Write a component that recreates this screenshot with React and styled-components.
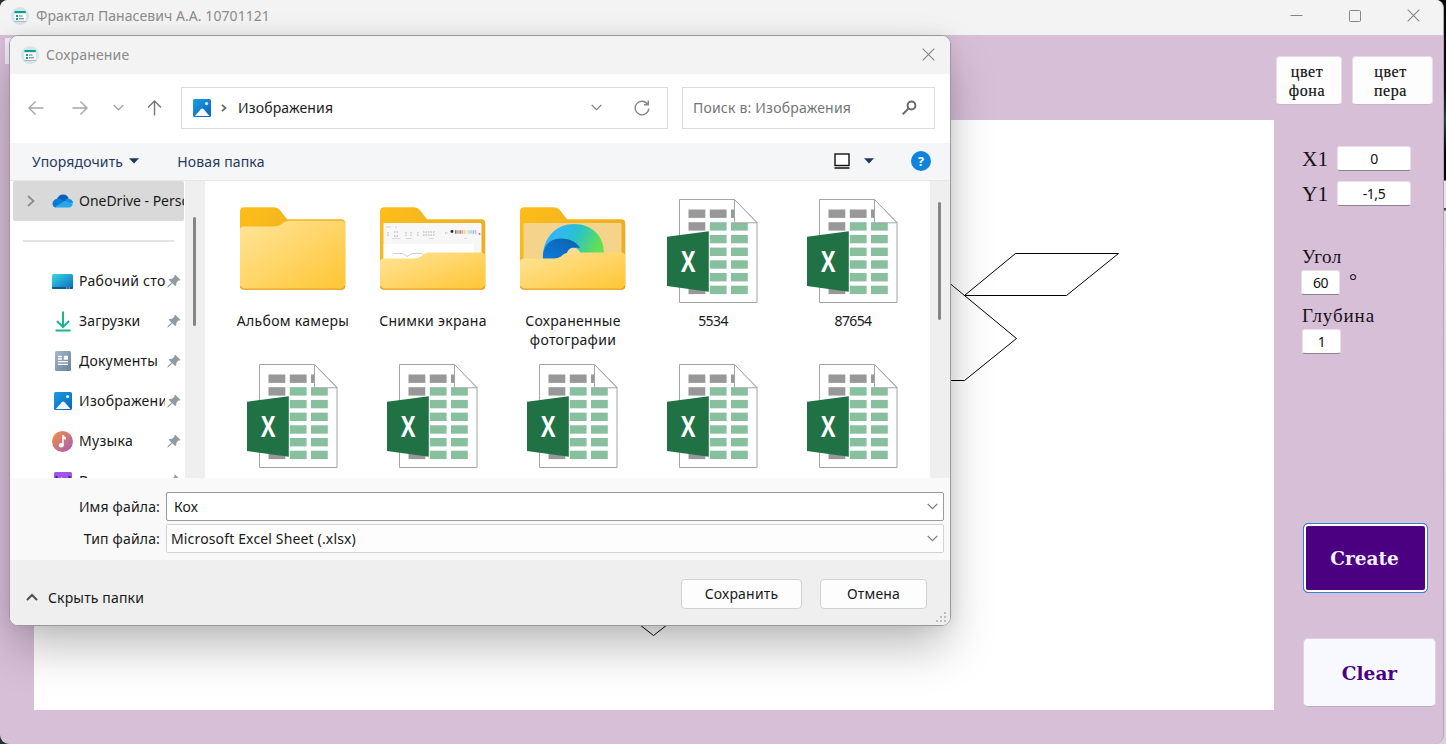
import React from "react";
import styled, { createGlobalStyle } from "styled-components";

const UI = `"Noto Sans", "Open Sans", sans-serif`;
const SERIF = `"Liberation Serif", serif`;

const Global = createGlobalStyle`
  * { box-sizing: border-box; }
  body { margin: 0; overflow: hidden; font-family: ${UI}; }
  svg { display: block; flex: none; }
`;

const Desktop = styled.div`
  width: 1446px;
  height: 744px;
  position: relative;
  overflow: hidden;
  background: linear-gradient(
    to bottom,
    #050807 0, #0a0d0c 90px, #26463c 120px, #050807 150px, #050807 180px,
    #e4e4e4 181px, #e4e4e4 208px, #34504a 208px, #34504a 210px, #dedede 211px, #d4d4d4 100%
  );
`;

const Corner = styled.div`
  position: absolute;
  left: 0;
  width: 12px;
  height: 12px;
  background: #26302a;
  ${(p) => (p.$bottom ? "bottom: 0;" : "top: 0;")}
`;

const MainWindow = styled.div`
  position: relative;
  width: 1444px;
  height: 744px;
  display: flex;
  flex-direction: column;
  background: #d8bfd8;
  border-right: 1px solid #b5a3b5;
  border-radius: 8px 8px 9px 9px;
  overflow: hidden;
`;

const MainTitle = styled.header`
  height: 35px;
  flex: none;
  display: flex;
  align-items: center;
  padding: 0 23px 4px 11px;
  background: #f3f3f3;
`;

const TitleText = styled.span`
  margin-left: 7px;
  color: #8b8b8b;
  font-size: 14px;
  letter-spacing: ${(p) => p.$ls || 0}px;
  white-space: nowrap;
`;

const WindowControls = styled.div`
  margin-left: auto;
  display: flex;
  gap: 46px;
  align-items: center;
`;

const TopBar = styled.div`
  height: 85px;
  flex: none;
  display: flex;
  justify-content: flex-end;
  gap: 10px;
  padding: 21px 10px 0 5px;
`;

const MenuStrip = styled.div`
  width: 300px;
  height: 26px;
  margin-top: -18px;
  margin-right: auto;
  background: #f1ecf5;
`;

const ColorButton = styled.button`
  width: ${(p) => p.$w}px;
  height: 49px;
  padding: 0 4px 0 0;
  border: 1px solid #e6dce6;
  border-bottom-color: #c8b8c8;
  border-radius: 4px;
  background: #fdfdfd;
  color: #111;
  font: 16px/19px ${SERIF};
  letter-spacing: 0.6px;
  -webkit-text-stroke: 0.2px #111;
`;

const Workspace = styled.div`
  display: flex;
  height: 590px;
  padding-left: 34px;
`;

const Canvas = styled.div`
  width: 1240px;
  background: #fff;
`;

const Controls = styled.aside`
  width: 169px;
  padding: 26px 0 0 28px;
  display: flex;
  flex-direction: column;
  color: #151015;
  font-family: ${SERIF};
`;

const CoordRow = styled.label`
  display: flex;
  align-items: center;
  height: 25px;
  margin-bottom: 10px;
  font-size: 21.5px;
`;

const CoordName = styled.span`
  width: 35px;
  padding-top: 1px;
`;

const Value = styled.div`
  width: ${(p) => p.$w}px;
  height: 25px;
  margin-top: ${(p) => p.$mt || 0}px;
  border-radius: 3px;
  border: 1px solid #e8e2e8;
  border-bottom: 1px solid #868686;
  background: #fff;
  color: #111;
  font: 14px/23px ${UI};
  letter-spacing: -0.4px;
  text-align: center;
`;

const FieldName = styled.div`
  font-size: 19px;
  line-height: 22px;
  letter-spacing: ${(p) => p.$ls}px;
  margin-top: ${(p) => p.$mt}px;
`;

const AngleRow = styled.div`
  display: flex;
  gap: 9px;
  margin: 2px 0 0 -1px;
  font-size: 20px;
  line-height: 22px;
`;

const ActionButton = styled.button`
  font: bold 18.5px "DejaVu Serif", serif;
  border-radius: 5px;
`;

const CreateButton = styled(ActionButton)`
  width: 125px;
  height: 70px;
  margin: 169px 0 0 1px;
  padding: 1px 2px 0 0;
  color: #f3eefb;
  background: #4b0082;
  border: 1.5px solid #2d86d3;
  box-shadow: inset 0 0 0 2px #fff;
`;

const ClearButton = styled(ActionButton)`
  width: 133px;
  height: 69px;
  margin: 45px 0 0 1px;
  padding: 1px 0 0;
  color: #4b0082;
  background: #f8f9ff;
  border: 1px solid #dcd2e2;
  border-bottom-color: #bfb0c2;
  flex: none;
`;

const Dialog = styled.section`
  position: absolute;
  left: 9px;
  top: 35px;
  width: 942px;
  height: 591px;
  display: flex;
  flex-direction: column;
  border: 1px solid #9c979c;
  border-radius: 9px;
  background: #fff;
  font-size: 14px;
  letter-spacing: 0.15px;
  overflow: hidden;
`;

const DialogShadow = styled.div`
  position: absolute;
  left: 9px;
  top: 35px;
  width: 942px;
  height: 591px;
  border-radius: 9px;
  box-shadow: 0 24px 48px -4px rgba(0, 0, 0, 0.27), 0 0 16px rgba(0, 0, 0, 0.08);
`;

const DialogTitle = styled.header`
  height: 38px;
  flex: none;
  display: flex;
  align-items: center;
  justify-content: space-between;
  padding: 0 15px 1px 11px;
  background: #f3f3f3;
`;

const TitleGroup = styled.div`
  display: flex;
  align-items: center;
`;

const NavBar = styled.div`
  height: 69px;
  flex: none;
  display: flex;
  align-items: center;
  padding: 0 15px 2px 18px;
`;

const NavGroup = styled.div`
  width: 153px;
  display: grid;
  grid-template-columns: 44px 41px 34px 34px;
  align-items: center;
`;

const AddressBox = styled.div`
  width: 487px;
  height: 42px;
  display: flex;
  align-items: center;
  padding: 0 17px 0 11px;
  border: 1px solid #dcdcdc;
`;

const AddressChevron = styled.svg`
  margin-left: 10px;
`;

const AddressText = styled.span`
  margin: 0 auto 0 11px;
  color: #1d1d1d;
`;

const RefreshIcon = styled.svg`
  margin-left: 32px;
`;

const SearchBox = styled.div`
  width: 253px;
  height: 42px;
  margin-left: auto;
  display: flex;
  align-items: center;
  justify-content: space-between;
  padding: 0 17px 0 10px;
  border: 1px solid #dcdcdc;
  color: #757575;
  letter-spacing: 0.2px;
`;

const Toolbar = styled.div`
  height: 38px;
  flex: none;
  display: flex;
  align-items: center;
  padding: 0 19px 1px 22px;
  background: #f4f6f8;
  border-bottom: 1px solid #e4e8ec;
  color: #24395c;
`;

const ToolbarSpacer = styled.div`
  width: ${(p) => (p.$w ? `${p.$w}px` : "auto")};
  flex: ${(p) => (p.$w ? "none" : 1)};
`;

const Browser = styled.div`
  height: 297px;
  flex: none;
  display: flex;
  overflow: hidden;
`;

const Sidebar = styled.nav`
  width: 175px;
  padding-left: 3px;
  overflow: hidden;
`;

const SideRow = styled.div`
  width: 171px;
  height: 40px;
  display: flex;
  align-items: center;
  padding-left: ${(p) => (p.$active ? 14 : 39)}px;
  background: ${(p) => (p.$active ? "#d9d9d9" : "transparent")};
  border-radius: 2px;
  overflow: hidden;
`;

const SideIcon = styled.span`
  width: 21px;
  margin-left: ${(p) => p.$ml || 0}px;
  display: flex;
  justify-content: center;
  flex: none;
`;

const SideText = styled.span`
  width: ${(p) => p.$w}px;
  flex: none;
  margin-left: 6px;
  margin-right: 2px;
  padding-bottom: 1px;
  color: #191919;
  letter-spacing: ${(p) => p.$ls}px;
  white-space: nowrap;
  overflow: hidden;
`;

const Divider = styled.div`
  height: 40px;
  display: flex;
  align-items: center;
  padding-left: 10px;
  &::after {
    content: "";
    width: 151px;
    height: 2px;
    background: #e4e4e4;
  }
`;

const ScrollTrack = styled.div`
  width: 20px;
  flex: none;
  padding: ${(p) => p.$top}px 0 0 ${(p) => p.$left}px;
  background: #efefef;
`;

const ScrollThumb = styled.div`
  width: 3px;
  height: ${(p) => p.$h}px;
  border-radius: 2px;
  background: #858585;
`;

const FileGrid = styled.div`
  width: 725px;
  padding: 17px 0 0 18px;
  display: grid;
  grid-template-columns: repeat(5, 140px);
  grid-auto-rows: 165px;
  align-content: start;
  overflow: hidden;
`;

const FileItem = styled.div`
  display: flex;
  flex-direction: column;
  align-items: center;
`;

const FileName = styled.div`
  margin-top: 7px;
  width: 122px;
  text-align: center;
  color: #191919;
  line-height: 19px;
  letter-spacing: ${(p) => (p.$digits ? -0.6 : 0.3)}px;
`;

const Fields = styled.div`
  height: 82px;
  flex: none;
  display: flex;
  flex-direction: column;
  gap: 3px;
  padding: 14px 6px 0 0;
  background: #f9f9f9;
`;

const FieldRow = styled.div`
  display: flex;
  align-items: center;
  height: 29px;
`;

const FieldLabel = styled.span`
  width: 150px;
  margin-right: 6px;
  text-align: right;
  color: #191919;
`;

const Combo = styled.div`
  flex: 1;
  height: 29px;
  display: flex;
  align-items: center;
  justify-content: space-between;
  padding: 0 5px 1px ${(p) => (p.$strong ? 7 : 4)}px;
  border: 1px solid ${(p) => (p.$strong ? "#9b9b9b" : "#d3d3d3")};
  border-radius: 2px;
  background: ${(p) => (p.$strong ? "#fff" : "#fdfdfd")};
  color: #191919;
`;

const Footer = styled.footer`
  flex: 1;
  display: flex;
  align-items: flex-start;
  padding: 19px 5px 0 16px;
  background: #efefef;
  color: #191919;
`;

const HideFolders = styled.div`
  display: flex;
  align-items: center;
  gap: 10px;
  margin: 9px auto 0 0;
  height: 18px;
`;

const DialogButton = styled.button`
  width: ${(p) => p.$w}px;
  height: 30px;
  margin-right: 18px;
  padding: 0 0 1px;
  border: 1px solid #d2d2d2;
  border-radius: 4px;
  background: #fdfdfd;
  color: #191919;
  font: 14px ${UI};
  letter-spacing: 0.2px;
`;

const Grip = styled.div`
  position: absolute;
  right: 3px;
  bottom: 2px;
`;

const AppIcon = () => (
  <svg width="18" height="18" viewBox="0 0 18 18">
    <circle cx="9" cy="9" r="9" fill="#d5e3ec" />
    <rect x="3.4" y="4" width="11.4" height="10" fill="#fff" />
    <rect x="3.4" y="4" width="11.4" height="2.2" fill="#0d9f89" />
    <path d="M3 14.4h12.2" stroke="#a3b0ba" strokeWidth=".9" />
    <path d="M5 8h2v2H5zM5 11h2v2H5z" fill="#0d9f89" />
    <path d="M8 9h3.5M8 11.8h5" stroke="#4e5d68" strokeWidth=".9" />
  </svg>
);

const Close = ({ size = 13 }) => (
  <svg width={size} height={size} viewBox="0 0 13 13" fill="none" stroke="#858585" strokeWidth="1.1">
    <path d="M.7.7l11.6 11.6M12.3.7L.7 12.3" />
  </svg>
);

const Chevron = ({ w = 11, color = "#7e7e7e", sw = 1.3 }) => (
  <svg width={w} height="7" viewBox="0 0 11 7" fill="none" stroke={color} strokeWidth={sw}>
    <path d="M.7.9l4.8 4.8L10.3.9" />
  </svg>
);

const Caret = () => (
  <svg width="10" height="6" viewBox="0 0 10 6">
    <path d="M0 .3h10L5 5.6z" fill="#1f3761" />
  </svg>
);

const Picture = ({ id }) => (
  <svg width="18" height="18" viewBox="0 0 18 18">
    <defs>
      <linearGradient id={id} x1="0" y1="0" x2="1" y2="1">
        <stop offset="0" stopColor="#1b9de2" />
        <stop offset="1" stopColor="#0a62bd" />
      </linearGradient>
    </defs>
    <rect width="18" height="18" rx="1.6" fill={`url(#${id})`} />
    <circle cx="13.6" cy="4.6" r="1.7" fill="#c9ebfc" />
    <path d="M1.8 17l6-6.8q1.4-1.3 2.8 0l6 6.8z" fill="#f2f8fd" />
  </svg>
);

const OneDrive = () => (
  <svg width="21" height="14" viewBox="0 0 21 14">
    <path d="M5 5.2C6.2 1.4 9 .3 11.4.4c2.8.1 4.7 1.8 5.3 4.2L12 9z" fill="#0862b8" />
    <path d="M5 4.8c2.3-.7 4 .1 5.6 1.1L14 8 3.5 13.5C-.7 12.5-.7 6 5 4.8z" fill="#0f78d4" />
    <path d="M13 6.2c1.3-1.9 3.3-2 4.6-1.2 2.2.4 3.4 2.2 3.4 4.3L16 10z" fill="#1490df" />
    <path d="M3 12.9l9.500-5.800c2.500.5 5.500 1.600 8.300 3.500-.6 1.700-2 2.900-4 2.900H5.500c-1 0-1.800-.1-2.500-.6z" fill="#28a8ea" />
  </svg>
);

const DesktopIcon = () => (
  <svg width="21" height="15" viewBox="0 0 21 15">
    <defs>
      <linearGradient id="desk" x1="0" y1="0" x2="1" y2="1">
        <stop offset="0" stopColor="#38d8e4" />
        <stop offset="1" stopColor="#0d68bd" />
      </linearGradient>
    </defs>
    <rect width="21" height="15" rx="1.5" fill="url(#desk)" />
    <path d="M0 13h21v.5q0 1.5-1.5 1.5h-18Q0 15 0 13.5z" fill="#16588b" />
    <path d="M14 14h1.2M16.5 14h1.2" stroke="#cde" strokeWidth="1" />
  </svg>
);

const DownloadIcon = () => (
  <svg width="16" height="21" viewBox="0 0 16 21" fill="none" stroke="#1db294" strokeWidth="2">
    <path d="M8 .5v15M2 10l6 6 6-6M.5 19.5h15" />
  </svg>
);

const DocumentIcon = () => (
  <svg width="16" height="20" viewBox="0 0 16 20">
    <defs>
      <linearGradient id="doc" x1="0" y1="0" x2="1" y2="1">
        <stop offset="0" stopColor="#a3b8cb" />
        <stop offset="1" stopColor="#65819f" />
      </linearGradient>
    </defs>
    <rect width="16" height="20" rx="1.5" fill="url(#doc)" />
    <path d="M3 5.5h4M3 8h4M3 10.7h10M3 13.4h10" stroke="#fff" strokeWidth="1.3" />
    <rect x="8.8" y="4.7" width="4.2" height="4" fill="#fff" />
  </svg>
);

const MusicIcon = () => (
  <svg width="21" height="21" viewBox="0 0 21 21">
    <defs>
      <linearGradient id="mus" x1="0" y1="0" x2="1" y2="1">
        <stop offset="0.1" stopColor="#ee8d4d" />
        <stop offset="1" stopColor="#a45ab8" />
      </linearGradient>
    </defs>
    <circle cx="10.5" cy="10.5" r="10.5" fill="url(#mus)" />
    <ellipse cx="9.2" cy="14.3" rx="2.5" ry="2.3" fill="#fff" />
    <path d="M10.2 4h1.5c.2 1.500 1 2 2.300 2.200v2.300c-.9.1-1.700-.1-2.300-.6v6.400h-1.500z" fill="#fff" />
  </svg>
);

const VideoIcon = () => (
  <svg width="18" height="18" viewBox="0 0 18 18">
    <rect width="18" height="18" rx="1.5" fill="#a254e6" />
    <path d="M1.5 4h2v2h-2zM14.5 4h2v2h-2z" fill="#45217a" />
    <path d="M7 5l5 4-5 4z" fill="#fff" />
  </svg>
);

const Pin = () => (
  <svg width="14" height="14" viewBox="0 0 14 14" fill="#8e99a3">
    <path d="M8 .5L13.5 6q-.8.9-2 .5L9.3 8.7q.6 2.100-.9 3.500L5.400 9.300 1 13.500l-.7-.3.200-.8L4.600 8.600 1.700 5.700q1.500-1.500 3.600-.9L7.500 2.600Q7.100 1.300 8 .5z" />
  </svg>
);

const HiddenDefs = styled.svg`
  position: absolute;
`;

const FolderDefs = () => (
  <HiddenDefs width="0" height="0">
    <defs>
      <linearGradient id="front" x1="0" y1="0" x2="1" y2="1">
        <stop offset="0" stopColor="#ffe49a" />
        <stop offset="1" stopColor="#ffc633" />
      </linearGradient>
      <linearGradient id="back" x1="0" y1="0" x2="1" y2="0.6">
        <stop offset="0" stopColor="#fdbd1a" />
        <stop offset="1" stopColor="#e9ac24" />
      </linearGradient>
      <linearGradient id="swirl" x1="0" y1="0" x2="1" y2="0.3">
        <stop offset="0" stopColor="#37a8f4" />
        <stop offset=".3" stopColor="#31b8f4" />
        <stop offset=".6" stopColor="#29c3c8" />
        <stop offset="1" stopColor="#62df55" />
      </linearGradient>
      <linearGradient id="wave" x1="0" y1="1" x2="1" y2="0">
        <stop offset="0" stopColor="#0b7ddb" />
        <stop offset="1" stopColor="#0c60ae" />
      </linearGradient>
    </defs>
  </HiddenDefs>
);

const BACK = "M0 13.5q0-4.3 4.3-4.3H34q3.5 0 5.7 2.6L47 21.2h54q4.3 0 4.3 4.3v62q0 4.3-4.3 4.3H4.3Q0 91.8 0 87.5z";
const CLOSED_FRONT = "M0 32.5q0-4 4-4h30q4 0 6.5-1.7L44 24.3q2.200-1.600 5-1.600h52q4.300 0 4.300 4.300v60.500q0 4.300-4.300 4.300H4.300Q0 91.800 0 87.500z";
const OPEN_FRONT = "M0 64.5q0-4 4-4h30q4 0 6.500-1.700l3.500-2.700q2.200-1.600 5-1.600h52q4.300 0 4.300 4.300v28.700q0 4.300-4.300 4.300H4.300Q0 91.800 0 87.500z";

const PALETTE = ["#222", "#777", "#a23", "#e55", "#f9b25a", "#f1e25c", "#7bd07c", "#6bc4e8", "#6a86dc", "#b58ad6"];

const Folder = ({ content }) => (
  <svg width="106" height="106" viewBox="0 0 106 106">
    <path d={BACK} fill="url(#back)" />
    {content === "screens" && (
      <g>
        <rect x="3.5" y="25" width="98" height="40" rx="1" fill="#f7f7f7" />
        <path d="M6 29h5M15 29h2" stroke="#c5c5c5" strokeWidth=".8" />
        <path d="M8 34v5M14 34h5M14 38h5M26 34v5M31 34v5M38 34v4M43 34h12M43 37h12M65 35h3" stroke="#bcc6cf" strokeWidth="1.3" strokeDasharray="1.5 1" />
        <path d="M12 40.5h8M26 40.5h6M49 40.5h5M84 40.5h3" stroke="#d0d0d0" strokeWidth=".8" />
        <circle cx="72" cy="33.5" r="1.4" fill="#222" />
        {PALETTE.map((c, i) => (
          <rect key={c} x={75 + i * 2.2} y="32.2" width="1.5" height="3.6" fill={c} opacity=".6" />
        ))}
        <circle cx="99.5" cy="36" r="1" fill="#c76bd0" />
        <rect x="3.5" y="46" width="90" height="18" fill="#fff" />
        <path d="M13 55.5h10l4 3 5-3h10l3 2" fill="none" stroke="#c4c4c4" strokeWidth=".8" />
      </g>
    )}
    {content === "photos" && (
      <g>
        <rect x="3.5" y="25" width="98" height="40" rx="1.5" fill="#f4d48b" />
        <path d="M23 61C22 40 36 26 54 26S84 38 84 56L60 61z" fill="url(#swirl)" />
        <path d="M23 61c-1-12 6-20.5 18-20.5 9 0 16 4 19 9.5-6-2-9 2-12 6q-4 5-10 6z" fill="url(#wave)" />
        <path d="M47 55.5c1-7 11-8 13.5 0l-1 5H44z" fill="#f1d9a0" />
      </g>
    )}
    <path d={content ? OPEN_FRONT : CLOSED_FRONT} fill="url(#front)" />
    <path d="M.6 88q.7 3.2 4 3.2h96.2q3.3 0 4-3.2" fill="none" stroke="#e3a52e" strokeWidth="1.3" />
  </svg>
);

const COLS = [21.5, 42.8, 64];
const ROWS = [0, 1, 2, 3, 4, 5, 6];

const Excel = () => (
  <svg width="92" height="106" viewBox="0 0 92 106">
    <path d="M12.5 1.5h55L90 24.5v80H12.5z" fill="#fff" stroke="#a5a5a5" />
    {ROWS.map((r) =>
      COLS.map((x, c) => (
        <rect
          key={`${r}-${c}`}
          x={x}
          y={11.5 + r * 12.7}
          width={r === 0 && c === 2 ? 4 : 16.8}
          height="8.4"
          fill={r === 0 || c === 0 ? "#989898" : "#87bf9f"}
        />
      ))
    )}
    <path d="M67.5 1.5v23.3H90z" fill="#fff" stroke="#a5a5a5" />
    <path d="M0 38.7l41.8-5.5v60.5L0 88z" fill="#207245" />
    <text x="14" y="73.5" fill="#fff" fontFamily="Open Sans" fontWeight="700" fontSize="28" textLength="14.5" lengthAdjust="spacingAndGlyphs">X</text>
  </svg>
);

const PLACES = [
  { name: "Рабочий стол", icon: <DesktopIcon />, ls: 0.3 },
  { name: "Загрузки", icon: <DownloadIcon />, ls: 0.15 },
  { name: "Документы", icon: <DocumentIcon />, ls: 0.2 },
  { name: "Изображения", icon: <Picture id="pic2" />, ls: 0.3 },
  { name: "Музыка", icon: <MusicIcon />, ls: 0.3 },
  { name: "Видео", icon: <VideoIcon />, ls: 0.2 },
];

const FILES = [
  { name: "Альбом камеры", icon: <Folder /> },
  { name: "Снимки экрана", icon: <Folder content="screens" /> },
  { name: "Сохраненные фотографии", icon: <Folder content="photos" /> },
  { name: "5534", icon: <Excel />, digits: true },
  { name: "87654", icon: <Excel />, digits: true },
  ...[1, 2, 3, 4, 5].map(() => ({ name: "", icon: <Excel /> })),
];

const Fractal = () => (
  <svg width="1240" height="590" viewBox="34 120 1240 590" fill="none" stroke="#000">
    <path d="M913.5 253.5l51 42 51-42h103l-52 42h-102l52 43-52 42h-62M602.5 595.5l51 40 51-40" />
  </svg>
);

const NavButtons = () => (
  <NavGroup>
    <svg width="16" height="16" viewBox="0 0 16 16" fill="none" stroke="#a6a6a6" strokeWidth="1.4">
      <path d="M15.500 8H1M7.500 1.500L1 8l6.500 6.500" />
    </svg>
    <svg width="16" height="16" viewBox="0 0 16 16" fill="none" stroke="#a6a6a6" strokeWidth="1.4">
      <path d="M.5 8H15M8.500 1.500L15 8l-6.500 6.500" />
    </svg>
    <Chevron color="#a6a6a6" sw={1.4} />
    <svg width="15" height="16" viewBox="0 0 15 16" fill="none" stroke="#757575" strokeWidth="1.4">
      <path d="M7.500 15.500V1M1 7.500L7.500 1 14 7.500" />
    </svg>
  </NavGroup>
);

export default function App() {
  return (
    <Desktop>
      <Global />
      <Corner />
      <Corner $bottom />
      <FolderDefs />
      <MainWindow>
        <MainTitle>
          <AppIcon />
          <TitleText $ls={0.07}>Фрактал Панасевич А.А. 10701121</TitleText>
          <WindowControls>
            <svg width="13" height="13" viewBox="0 0 13 13" stroke="#858585"><path d="M.5 6.5h12" /></svg>
            <svg width="12" height="12" viewBox="0 0 12 12" fill="none" stroke="#858585"><rect x=".5" y=".5" width="11" height="11" rx="1" /></svg>
            <Close />
          </WindowControls>
        </MainTitle>
        <TopBar>
          <MenuStrip />
          <ColorButton $w={66}>цвет<br />фона</ColorButton>
          <ColorButton $w={81}>цвет<br />пера</ColorButton>
        </TopBar>
        <Workspace>
          <Canvas><Fractal /></Canvas>
          <Controls>
            <CoordRow><CoordName>X1</CoordName><Value $w={74}>0</Value></CoordRow>
            <CoordRow><CoordName>Y1</CoordName><Value $w={74}>-1,5</Value></CoordRow>
            <FieldName $mt={30} $ls={0.5}>Угол</FieldName>
            <AngleRow><Value $w={39}>60</Value><span>°</span></AngleRow>
            <FieldName $mt={10} $ls={0.9}>Глубина</FieldName>
            <Value $w={39} $mt={2}>1</Value>
            <CreateButton>Create</CreateButton>
            <ClearButton>Clear</ClearButton>
          </Controls>
        </Workspace>
        <DialogShadow />
      </MainWindow>
      <Dialog>
        <DialogTitle>
          <TitleGroup>
            <AppIcon />
            <TitleText $ls={0.15}>Сохранение</TitleText>
          </TitleGroup>
          <Close />
        </DialogTitle>
        <NavBar>
          <NavButtons />
          <AddressBox>
            <Picture id="pic1" />
            <AddressChevron width="6" height="8" viewBox="0 0 6 8" fill="none" stroke="#6a6a6a" strokeWidth="1.8">
              <path d="M1 .8L4.5 4 1 7.2" />
            </AddressChevron>
            <AddressText>Изображения</AddressText>
            <Chevron />
            <RefreshIcon width="16" height="16" viewBox="0 0 16 16" fill="none" stroke="#858585" strokeWidth="1.4">
              <path d="M13.5 4A6.8 6.8 0 1 0 14.8 8.5M14.3.5v4.3H10" />
            </RefreshIcon>
          </AddressBox>
          <SearchBox>
            Поиск в: Изображения
            <svg width="15" height="15" viewBox="0 0 15 15" fill="none" stroke="#696969" strokeWidth="2">
              <circle cx="9.5" cy="5.500" r="3.900" />
              <path d="M6.600 8.400L.8 14.200" />
            </svg>
          </SearchBox>
        </NavBar>
        <Toolbar>
          <span>Упорядочить</span>
          <ToolbarSpacer $w={6} />
          <Caret />
          <ToolbarSpacer $w={38} />
          <span>Новая папка</span>
          <ToolbarSpacer />
          <svg width="16" height="16" viewBox="0 0 16 16" fill="#fff" stroke="#111">
            <rect x="1" y="1" width="14" height="11.5" strokeWidth="1.4" />
            <path d="M.5 15h15" strokeWidth="1.3" />
          </svg>
          <ToolbarSpacer $w={14} />
          <Caret />
          <ToolbarSpacer $w={37} />
          <svg width="20" height="20" viewBox="0 0 20 20">
            <circle cx="10" cy="10" r="10" fill="#0f84dc" />
            <text x="10" y="14.5" fill="#fff" fontFamily="Open Sans" fontWeight="700" fontSize="12.5" textAnchor="middle">?</text>
          </svg>
        </Toolbar>
        <Browser>
          <Sidebar>
            <SideRow $active>
              <svg width="8" height="12" viewBox="0 0 8 12" fill="none" stroke="#8a8a8a" strokeWidth="1.7">
                <path d="M1 1l5.5 5L1 11" />
              </svg>
              <SideIcon $ml={17}><OneDrive /></SideIcon>
              <SideText $w={110} $ls={-0.02}>OneDrive - Personal</SideText>
            </SideRow>
            <Divider />
            {PLACES.map((p) => (
              <SideRow key={p.name}>
                <SideIcon>{p.icon}</SideIcon>
                <SideText $w={86} $ls={p.ls}>{p.name}</SideText>
                <Pin />
              </SideRow>
            ))}
          </Sidebar>
          <ScrollTrack $top={36} $left={8}><ScrollThumb $h={109} /></ScrollTrack>
          <FileGrid>
            {FILES.map((f, i) => (
              <FileItem key={i}>
                {f.icon}
                <FileName $digits={f.digits}>{f.name}</FileName>
              </FileItem>
            ))}
          </FileGrid>
          <ScrollTrack $top={21} $left={8}><ScrollThumb $h={118} /></ScrollTrack>
        </Browser>
        <Fields>
          <FieldRow>
            <FieldLabel>Имя файла:</FieldLabel>
            <Combo $strong>Кох<Chevron /></Combo>
          </FieldRow>
          <FieldRow>
            <FieldLabel>Тип файла:</FieldLabel>
            <Combo>Microsoft Excel Sheet (.xlsx)<Chevron /></Combo>
          </FieldRow>
        </Fields>
        <Footer>
          <HideFolders>
            <svg width="12" height="8" viewBox="0 0 12 8" fill="none" stroke="#505050" strokeWidth="2">
              <path d="M1 7l5-5 5 5" />
            </svg>
            <span>Скрыть папки</span>
          </HideFolders>
          <DialogButton $w={121}>Сохранить</DialogButton>
          <DialogButton $w={107}>Отмена</DialogButton>
        </Footer>
        <Grip>
          <svg width="11" height="11" viewBox="0 0 11 11" fill="#bcbcbc">
            <path d="M8 0h2v2H8zM4 4h2v2H4zM8 4h2v2H8zM0 8h2v2H0zM4 8h2v2H4zM8 8h2v2H8z" />
          </svg>
        </Grip>
      </Dialog>
    </Desktop>
  );
}
